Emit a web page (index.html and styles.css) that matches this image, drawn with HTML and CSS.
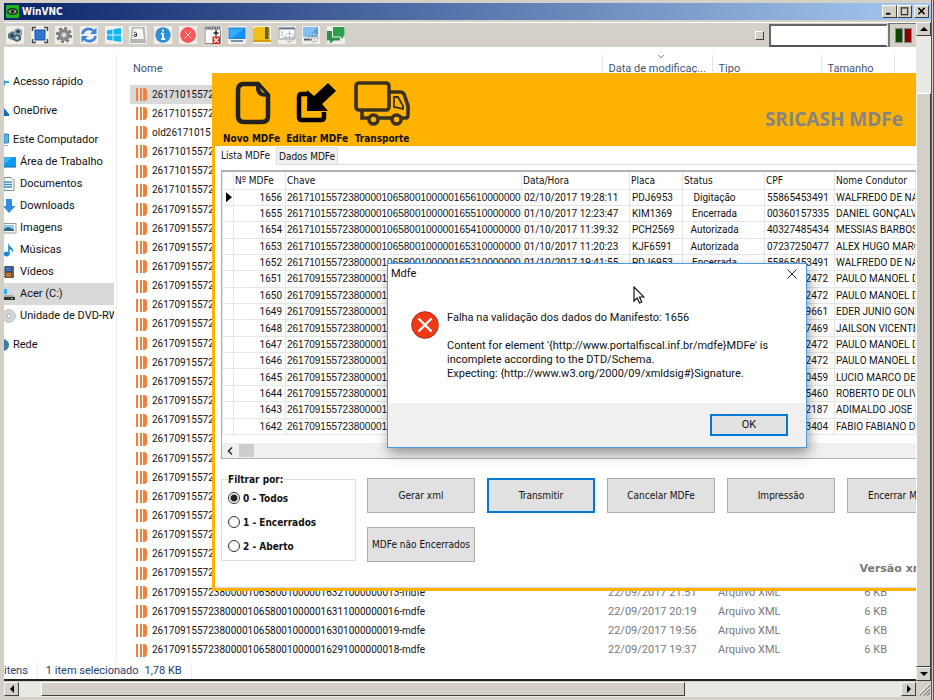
FILE: index.html
```html
<!DOCTYPE html>
<html lang="pt-BR">
<head>
<meta charset="utf-8">
<title>WinVNC</title>
<link rel="stylesheet" href="styles.css">
</head>
<body>
<div class="vnc">
  <header class="titlebar">
    <svg class="titlebar-icon" viewBox="0 0 13 13"><rect width="13" height="13" rx="1" fill="#21b321"/><ellipse cx="6.500" cy="6.500" rx="5.500" ry="3.600" fill="#123012"/><ellipse cx="6.500" cy="6.500" rx="4" ry="2" fill="#8aa08a"/><circle cx="6.500" cy="6.500" r="1.600" fill="#111"/></svg>
    <h1 class="titlebar-text">WinVNC</h1>
    <div class="titlebar-buttons">
      <button class="sys" aria-label="Minimizar"><svg viewBox="0 0 10 9"><path d="M1 7.500h5" stroke="#000" stroke-width="2"/></svg></button>
      <button class="sys" aria-label="Maximizar"><svg viewBox="0 0 10 9"><path d="M1 1h8M1.500 0v8.500h7V0" fill="none" stroke="#333" stroke-width="1.300"/></svg></button>
      <button class="sys sys-close" aria-label="Fechar"><svg viewBox="0 0 10 9"><path d="M1.500 1l7 7M8.500 1l-7 7" stroke="#000" stroke-width="1.700"/></svg></button>
    </div>
  </header>

  <div class="frame">
    <div class="main">
      <div class="toolbar">
        <div class="tools">
          <button class="tool" aria-label="Computadores"><svg viewBox="0 0 18 18"><path d="M2 8l4-3 4 2v4l-4 3-4-2z" fill="#5b7486"/><path d="M8 4l4-2 4 2v5l-4 2-4-2z" fill="#8aa0ae"/><path d="M7 10l4-2 4 2v4l-4 2-4-2z" fill="#4a6375"/><circle cx="12" cy="5.500" r="1.800" fill="#2d4352"/><circle cx="11" cy="12" r="1.800" fill="#c3d3dc"/><circle cx="6" cy="9.500" r="1.500" fill="#223643"/></svg></button>
          <button class="tool" aria-label="Tela cheia"><svg viewBox="0 0 18 18"><rect x="4" y="4" width="10" height="10" fill="#2f76d0" stroke="#1d56a8"/><path d="M1.500 5V1.500H5M13 1.500h3.500V5M16.500 13v3.500H13M5 16.500H1.500V13" fill="none" stroke="#444" stroke-width="1.500"/></svg></button>
          <button class="tool" aria-label="Opções"><svg viewBox="0 0 18 18"><circle cx="9" cy="9" r="6.800" fill="none" stroke="#777" stroke-width="2.600" stroke-dasharray="3 2.340"/><circle cx="9" cy="9" r="4.500" fill="none" stroke="#858585" stroke-width="3.200"/><circle cx="9" cy="9" r="2.500" fill="#e8e8e8" stroke="#555" stroke-width=".6"/></svg></button>
          <button class="tool" aria-label="Atualizar"><svg viewBox="0 0 18 18"><path d="M2.500 8C3 3 10 1 13.500 5M15.500 10C15 15 8 17 4.500 13" fill="none" stroke="#3d84d6" stroke-width="2.600"/><path d="M16.500 1.500v6.500h-6.500zM1.500 16.500V10H8z" fill="#3d84d6"/></svg></button>
          <button class="tool" aria-label="Iniciar"><svg viewBox="0 0 18 18"><path d="M2 4.300l5.500-.8v5H2zM8.500 3.300L16 2v6.500H8.500zM2 9.500h5.500v5L2 13.700zM8.500 9.500H16V16l-7.500-1.200z" fill="#0fb8f2"/></svg></button>
          <button class="tool" aria-label="Teclado"><svg viewBox="0 0 18 18"><path d="M1 17L3 1h12.500l1.500 16z" fill="#b5b5b5"/><path d="M3 13L4.500 2.500h9L15 13z" fill="#f5f5f5"/><path d="M5 7q2-1.500 2.500 0v3.200q-2.500 1-2.800-.5.200-1.500 2.800-1.200" fill="none" stroke="#333" stroke-width="1"/></svg></button>
          <button class="tool" aria-label="Informações"><svg viewBox="0 0 18 18"><circle cx="9" cy="9" r="7.700" fill="#2e8fd6"/><path d="M9 3.600v2M7 7.600h2v5.200M7 13.200h4.300" fill="none" stroke="#fff" stroke-width="1.700"/></svg></button>
          <button class="tool" aria-label="Desconectar"><svg viewBox="0 0 18 18"><circle cx="9" cy="9" r="7.900" fill="#fb5555"/><path d="M5.500 5.500l7 7M12.500 5.500l-7 7" stroke="#ffd8d8" stroke-width="1"/></svg></button>
          <button class="tool" aria-label="Fechar janela"><svg viewBox="0 0 18 18"><path d="M.5.500h16v3H.5z" fill="#6d7480"/><path d="M1 4v13.500h15.500V4" fill="#fff" stroke="#888"/><path d="M1 1.800h10M12 1.800h4" stroke="#d5dae2" stroke-dasharray="1 1"/><path d="M12 4v6M9.500 7h5" stroke="#222" stroke-width="1.400"/><rect x="8.500" y="10.500" width="7.500" height="7.500" fill="#e01818"/><path d="M10 12l4.500 4.500M14.500 12L10 16.500" stroke="#fff" stroke-width="1.500"/></svg></button>
          <button class="tool" aria-label="Área de trabalho"><svg viewBox="0 0 18 18"><rect x="1" y="2" width="16" height="10.500" fill="#0e93f5" stroke="#0873c9" stroke-width=".8"/><path d="M1.500 2.500H16L4 12H1.500z" fill="#35acfa"/><path d="M3 15h12" stroke="#3b6d96" stroke-width="1.400"/></svg></button>
          <button class="tool" aria-label="Arquivos"><svg viewBox="0 0 18 18"><path d="M0 3l2-2h14l1 2v13H0z" fill="#f2c117"/><path d="M0 14h18v2H0z" fill="#d99c08"/><rect x="12" y="1" width="3.500" height="12" fill="#5a533a"/><path d="M13.700 2v9" stroke="#8c8050" stroke-dasharray="1 1"/></svg></button>
          <button class="tool" aria-label="Selecionar janela"><svg viewBox="0 0 18 18"><path d="M1 2h16v11H1z" fill="#fff" stroke="#8d99a6"/><path d="M1 2.500h16" stroke="#6d7d8f" stroke-width="2"/><path d="M3 6h2M3 9h2" stroke="#99a"/><circle cx="11.500" cy="11.500" r="4.200" fill="none" stroke="#bbb"/><path d="M11.500 5v12M5 11.500h12.500" stroke="#bbb"/></svg></button>
          <button class="tool" aria-label="Selecionar monitor"><svg viewBox="0 0 18 18"><rect x="1" y="1" width="15" height="10" fill="#4aa0ea"/><path d="M1 1h15L6 11H1z" fill="#83c0f2"/><path d="M2 13.500h8" stroke="#557" stroke-width="2"/><circle cx="12" cy="12" r="4" fill="none" stroke="#c4c4c4"/><path d="M12 6.500v11M6 12h11.500" stroke="#c4c4c4"/></svg></button>
          <button class="tool" aria-label="Conversa"><svg viewBox="0 0 18 18"><path d="M6 1h11.500v9.500H16V13l-3-2.500H6z" fill="#2f9e4d"/><path d="M0 5h5v6.500h8v3H7l-4 3v-3H0z" fill="#2a9448"/></svg></button>
        </div>
        <div class="tool-dot"></div>
        <input class="tool-input" type="text" aria-label="Mensagem">
        <div class="leds"><i class="led led-green"></i><i class="led led-red"></i></div>
      </div>

      <div class="screen">
        <div class="explorer">
          <nav class="sidebar">
            <a class="place place-top" href="#"><svg class="place-icon" viewBox="0 0 9 14"><path d="M0 4l1 2h4v2H1.500L0 12z" fill="#3a9be0"/></svg>Acesso rápido</a>
            <a class="place place-top" href="#"><svg class="place-icon" viewBox="0 0 9 14"><path d="M0 4l5 6v2H0z" fill="#0a6cc8"/></svg>OneDrive</a>
            <a class="place place-top" href="#"><svg class="place-icon" viewBox="0 0 9 14"><path d="M0 1h4.500v9H0z" fill="#4fb9ee" stroke="#2d6f9c" stroke-width=".8"/><path d="M0 12.500h4" stroke="#9ab"/></svg>Este Computador</a>
            <a class="place" href="#"><svg class="place-icon" viewBox="0 0 14 14"><path d="M0 2h12v10H0z" fill="#139af0"/><path d="M0 2h9L0 9z" fill="#3fb2f8"/><path d="M0 12h12" stroke="#0b62ad"/></svg>Área de Trabalho</a>
            <a class="place" href="#"><svg class="place-icon" viewBox="0 0 14 14"><path d="M0 .5h7l3 3v10H0z" fill="#fff" stroke="#888"/><path d="M0 5h8M0 7.500h8M0 10h8" stroke="#3f93bb" stroke-width="1.300"/></svg>Documentos</a>
            <a class="place" href="#"><svg class="place-icon" viewBox="0 0 14 14"><path d="M2 0h6v7h3.500L5 14-1 7h3z" fill="#2f8ce0"/></svg>Downloads</a>
            <a class="place" href="#"><svg class="place-icon" viewBox="0 0 14 14"><path d="M0 2.500h12v9.500H0z" fill="#fff" stroke="#999"/><path d="M0 4h10v4H0z" fill="#8cc8f0"/><path d="M0 8l4-2 6 2.500V10H0z" fill="#2f6484"/></svg>Imagens</a>
            <a class="place" href="#"><svg class="place-icon" viewBox="0 0 14 14"><path d="M4.200 0Q5 3 8 5q2 2.500.5 5Q8.500 7 5.700 6V11a3 2.400 0 1 1-1.500-2z" fill="#1387dd"/></svg>Músicas</a>
            <a class="place" href="#"><svg class="place-icon" viewBox="0 0 14 14"><path d="M0 1h10v12H0z" fill="#333"/><path d="M1.500 1.500h6v5h-6z" fill="#3e6fc0"/><path d="M1.500 7.500h6v5h-6z" fill="#b5762e"/><path d="M9 1v12M.5 1v12" stroke="#ddd" stroke-dasharray="1.200 1"/></svg>Vídeos</a>
            <a class="place place-active" href="#"><svg class="place-icon" viewBox="0 0 14 14"><path d="M0 2h3v5H0z" fill="#1fb4f0"/><path d="M0 8h9l1.500 2.500H0z" fill="#aaa"/><path d="M0 10h11v3H0z" fill="#333"/><path d="M7 11.500h2" stroke="#3f6"/></svg>Acer (C:)</a>
            <a class="place" href="#"><svg class="place-icon" viewBox="0 0 14 14"><circle cx="5" cy="7" r="6.500" fill="#d2d5d6" stroke="#aaa" stroke-width=".6"/><circle cx="5" cy="7" r="2" fill="#fff" stroke="#999" stroke-width=".8"/></svg>Unidade de DVD-RW</a>
            <a class="place place-top" href="#"><svg class="place-icon" viewBox="0 0 9 14"><path d="M0 1q5 1.500 5 6t-5 6z" fill="#3d7f9c"/></svg>Rede</a>
          </nav>

          <div class="files">
            <table class="files-head">
              <thead>
                <tr><th class="f-name">Nome</th><th class="f-date">Data de modificaç...<svg class="sort" viewBox="0 0 8 4"><path d="M1 0l3 3 3-3" fill="none" stroke="#888"/></svg></th><th class="f-type">Tipo</th><th class="f-size">Tamanho</th><th></th></tr>
              </thead>
            </table>
            <table class="files-body">
              <tbody>
                <tr class="selected"><td class="f-name">26171015572</td><td class="f-date"></td><td class="f-type"></td><td class="f-size"></td><td></td></tr>
                <tr><td class="f-name">26171015572</td></tr>
                <tr><td class="f-name">old26171015</td></tr>
                <tr><td class="f-name">26171015572</td></tr>
                <tr><td class="f-name">26171015572</td></tr>
                <tr><td class="f-name">26171015572</td></tr>
                <tr><td class="f-name">26170915572</td></tr>
                <tr><td class="f-name">26170915572</td></tr>
                <tr><td class="f-name">26170915572</td></tr>
                <tr><td class="f-name">26170915572</td></tr>
                <tr><td class="f-name">26170915572</td></tr>
                <tr><td class="f-name">26170915572</td></tr>
                <tr><td class="f-name">26170915572</td></tr>
                <tr><td class="f-name">26170915572</td></tr>
                <tr><td class="f-name">26170915572</td></tr>
                <tr><td class="f-name">26170915572</td></tr>
                <tr><td class="f-name">26170915572</td></tr>
                <tr><td class="f-name">26170915572</td></tr>
                <tr><td class="f-name">26170915572</td></tr>
                <tr><td class="f-name">26170915572</td></tr>
                <tr><td class="f-name">26170915572</td></tr>
                <tr><td class="f-name">26170915572</td></tr>
                <tr><td class="f-name">26170915572</td></tr>
                <tr><td class="f-name">26170915572</td></tr>
                <tr><td class="f-name">26170915572</td></tr>
                <tr><td class="f-name">26170915572</td></tr>
                <tr><td class="f-name">26170915572380000106580010000016321000000013-mdfe</td><td class="f-date">22/09/2017 21:51</td><td class="f-type">Arquivo XML</td><td class="f-size">6 KB</td></tr>
                <tr><td class="f-name">26170915572380000106580010000016311000000016-mdfe</td><td class="f-date">22/09/2017 20:19</td><td class="f-type">Arquivo XML</td><td class="f-size">6 KB</td></tr>
                <tr><td class="f-name">26170915572380000106580010000016301000000019-mdfe</td><td class="f-date">22/09/2017 19:56</td><td class="f-type">Arquivo XML</td><td class="f-size">6 KB</td></tr>
                <tr><td class="f-name">26170915572380000106580010000016291000000018-mdfe</td><td class="f-date">22/09/2017 19:37</td><td class="f-type">Arquivo XML</td><td class="f-size">6 KB</td></tr>
              </tbody>
            </table>
          </div>
        </div>
        <footer class="status"><span class="status-cell">itens</span><span class="status-cell status-sel"><span>1 item selecionado</span><span>1,78 KB</span></span></footer>

        <section class="app">
          <div class="app-head">
            <button class="action"><svg viewBox="0 0 56 46"><path d="M20 3h14l10 11v21q0 6-6 6H20q-6 0-6-6V9q0-6 6-6z" fill="none" stroke="#222" stroke-width="4.500"/><path d="M32 2l14 13q-12 3-14-6z" fill="#222"/><path d="M36 7l5 5q-4 0-5-5z" fill="#f5ad0a"/></svg>Novo MDFe</button>
            <button class="action"><svg viewBox="0 0 56 46"><path d="M19 13h-6q-3 0-3 3v20q0 3 3 3h19q3 0 3-3v-5" fill="none" stroke="#000" stroke-width="4.500"/><path d="M39 2l8 8-14 13 6 7H18V9l7 6z" fill="#000"/></svg>Editar MDFe</button>
            <button class="action"><svg viewBox="0 0 56 46"><g fill="none" stroke="#3b321b" stroke-width="3.600"><rect x="2" y="2" width="33" height="27" rx="3"/><path d="M8 30v7h6M24 37h14M47 37h5q2 0 2-3v-9l-4-12q-1-2-4-2H36"/><circle cx="19.500" cy="38.500" r="4.500"/><circle cx="42.500" cy="38.500" r="4.500"/></g><path d="M40 16h4l5 9v3l-9-2z" fill="none" stroke="#3b321b" stroke-width="1.800"/></svg>Transporte</button>
            <h2 class="brand">SRICASH MDFe</h2>
          </div>

          <div class="app-body">
            <div class="tabs">
              <button class="tab tab-active">Lista MDFe</button>
              <button class="tab">Dados MDFe</button>
            </div>

            <div class="grid">
              <table class="records">
                <thead>
                  <tr><th class="c-mark"></th><th class="c-num">Nº MDFe</th><th class="c-key">Chave</th><th class="c-date">Data/Hora</th><th class="c-plate">Placa</th><th class="c-status">Status</th><th class="c-cpf">CPF</th><th class="c-driver">Nome Condutor</th></tr>
                </thead>
                <tbody>
                  <tr><td class="c-mark"><i class="marker"></i></td><td class="c-num">1656</td><td class="c-key">261710155723800001065800100000165610000000</td><td>02/10/2017 19:28:11</td><td>PDJ6953</td><td class="c-status">Digitação</td><td class="c-cpf">55865453491</td><td>WALFREDO DE NA</td></tr>
                  <tr><td></td><td class="c-num">1655</td><td class="c-key">261710155723800001065800100000165510000000</td><td>01/10/2017 12:23:47</td><td>KIM1369</td><td class="c-status">Encerrada</td><td class="c-cpf">00360157335</td><td>DANIEL GONÇALV</td></tr>
                  <tr><td></td><td class="c-num">1654</td><td class="c-key">261710155723800001065800100000165410000000</td><td>01/10/2017 11:39:32</td><td>PCH2569</td><td class="c-status">Autorizada</td><td class="c-cpf">40327485434</td><td>MESSIAS BARBOS</td></tr>
                  <tr><td></td><td class="c-num">1653</td><td class="c-key">261710155723800001065800100000165310000000</td><td>01/10/2017 11:20:23</td><td>KJF6591</td><td class="c-status">Autorizada</td><td class="c-cpf">07237250477</td><td>ALEX HUGO MARC</td></tr>
                  <tr><td></td><td class="c-num">1652</td><td class="c-key">261710155723800001065800100000165210000000</td><td>01/10/2017 19:41:55</td><td>PDJ6953</td><td class="c-status">Encerrada</td><td class="c-cpf">55865453491</td><td>WALFREDO DE NA</td></tr>
                  <tr><td></td><td class="c-num">1651</td><td class="c-key">261709155723800001</td><td></td><td></td><td></td><td class="c-cpf">2472</td><td>PAULO MANOEL D</td></tr>
                  <tr><td></td><td class="c-num">1650</td><td class="c-key">261709155723800001</td><td></td><td></td><td></td><td class="c-cpf">2472</td><td>PAULO MANOEL D</td></tr>
                  <tr><td></td><td class="c-num">1649</td><td class="c-key">261709155723800001</td><td></td><td></td><td></td><td class="c-cpf">9661</td><td>EDER JUNIO GON</td></tr>
                  <tr><td></td><td class="c-num">1648</td><td class="c-key">261709155723800001</td><td></td><td></td><td></td><td class="c-cpf">7469</td><td>JAILSON VICENTE</td></tr>
                  <tr><td></td><td class="c-num">1647</td><td class="c-key">261709155723800001</td><td></td><td></td><td></td><td class="c-cpf">2472</td><td>PAULO MANOEL D</td></tr>
                  <tr><td></td><td class="c-num">1646</td><td class="c-key">261709155723800001</td><td></td><td></td><td></td><td class="c-cpf">2472</td><td>PAULO MANOEL D</td></tr>
                  <tr><td></td><td class="c-num">1645</td><td class="c-key">261709155723800001</td><td></td><td></td><td></td><td class="c-cpf">0459</td><td>LUCIO MARCO DE</td></tr>
                  <tr><td></td><td class="c-num">1644</td><td class="c-key">261709155723800001</td><td></td><td></td><td></td><td class="c-cpf">5460</td><td>ROBERTO DE OLIV</td></tr>
                  <tr><td></td><td class="c-num">1643</td><td class="c-key">261709155723800001</td><td></td><td></td><td></td><td class="c-cpf">2187</td><td>ADIMALDO JOSE F</td></tr>
                  <tr><td></td><td class="c-num">1642</td><td class="c-key">261709155723800001</td><td></td><td></td><td></td><td class="c-cpf">3404</td><td>FABIO FABIANO D</td></tr>
                </tbody>
              </table>
              <div class="grid-scroll"><svg viewBox="0 0 6 8"><path d="M5 .5L1.500 4 5 7.500" fill="none" stroke="#333" stroke-width="1.600"/></svg><div class="grid-thumb"></div></div>
            </div>

            <div class="controls">
              <fieldset class="filter">
                <legend>Filtrar por:</legend>
                <label><input type="radio" name="filtro" checked>0 - Todos</label>
                <label><input type="radio" name="filtro">1 - Encerrados</label>
                <label><input type="radio" name="filtro">2 - Aberto</label>
              </fieldset>
              <div class="buttons">
                <button class="cmd">Gerar xml</button>
                <button class="cmd cmd-focus">Transmitir</button>
                <button class="cmd">Cancelar MDFe</button>
                <button class="cmd">Impressão</button>
                <button class="cmd">Encerrar MDFe</button>
                <button class="cmd">MDFe não Encerrados</button>
              </div>
            </div>
            <p class="version">Versão xml</p>
          </div>
        </section>

        <section class="dialog" role="dialog" aria-labelledby="dialog-title">
          <div class="dialog-head"><h2 id="dialog-title">Mdfe</h2><button class="dialog-close" aria-label="Fechar"><svg viewBox="0 0 10 10"><path d="M.5.500l9 9M9.500.500l-9 9" stroke="#222"/></svg></button></div>
          <div class="dialog-body">
            <svg class="error-icon" viewBox="0 0 28 28"><circle cx="14" cy="14" r="13.300" fill="#f03a17" stroke="#b82c17" stroke-width="1"/><path d="M7.500 7.500l13 13M20.500 7.500l-13 13" stroke="#fff" stroke-width="2.400"/></svg>
            <div class="dialog-text">
              <p>Falha na validação dos dados do Manifesto: 1656</p>
              <p>Content for element '{http://www.portalfiscal.inf.br/mdfe}MDFe' is<br>incomplete according to the DTD/Schema.<br>Expecting: {http://www.w3.org/2000/09/xmldsig#}Signature.</p>
            </div>
          </div>
          <div class="dialog-foot"><button class="ok">OK</button></div>
        </section>
        <svg class="cursor" viewBox="0 0 12 18"><path d="M1 1v14l3.200-3 2.300 5 2.300-1-2.300-5H11z" fill="#fff" stroke="#1a1014" stroke-width="1.200"/></svg>
      </div>

      <div class="hscroll">
        <button class="arrow" aria-label="Rolar para a esquerda"><svg viewBox="0 0 8 8"><path d="M6 0v8L2 4z"/></svg></button>
        <div class="htrack"><div class="hthumb"></div></div>
        <button class="arrow" aria-label="Rolar para a direita"><svg viewBox="0 0 8 8"><path d="M2 0v8l4-4z"/></svg></button>
      </div>
    </div>

    <div class="vscroll">
      <button class="arrow" aria-label="Rolar para cima"><svg viewBox="0 0 8 8"><path d="M0 6h8L4 2z"/></svg></button>
      <div class="vtrack"><div class="vthumb"></div></div>
      <button class="arrow" aria-label="Rolar para baixo"><svg viewBox="0 0 8 8"><path d="M0 2h8L4 6z"/></svg></button>
      <svg class="grip" viewBox="0 0 16 16"><path d="M4 15L15 4M8 15l7-7M12 15l3-3" stroke="#888" stroke-width="1.500"/><path d="M3 14L14 3M7 14l7-7" stroke="#fff"/></svg>
    </div>
  </div>
</div>
</body>
</html>
```
FILE: styles.css
```css
:root {
  --segoe: Roboto, "Open Sans", sans-serif;
  --tahoma: "DejaVu Sans Condensed", "DejaVu Sans", sans-serif;
  --face: #d4d0c8;
  --amber: #ffb200;
}
* { box-sizing: border-box; }
body, h1, h2, p { margin: 0; }
body { font: 11px/14px var(--segoe); color: #111; background: var(--face); }
button, input { font: inherit; color: inherit; margin: 0; padding: 0; }
svg { display: block; }
table { border-collapse: collapse; table-layout: fixed; }
th { font-weight: normal; text-align: left; }
a { color: inherit; text-decoration: none; }

/* outer window */
.vnc {
  display: flex;
  flex-direction: column;
  height: 100vh;
  padding: 3px 0 3px 4px;
  border-right: 3px double #555;
  background: var(--face);
  overflow: hidden;
}
.titlebar {
  display: flex;
  align-items: center;
  gap: 3px;
  height: 17px;
  padding: 0 2px;
  background: linear-gradient(90deg, #0a246a, #a6caf0);
}
.titlebar-icon { width: 13px; height: 13px; }
.titlebar-text { flex: 1; font: bold 10px/16px var(--tahoma); color: #fff; }
.titlebar-buttons { display: flex; }
.sys {
  width: 15px;
  height: 13px;
  padding: 1px 2px;
  background: var(--face);
  border: 1px solid;
  border-color: #fff #404040 #404040 #fff;
}
.sys-close { margin-left: 2px; }
.frame { display: flex; flex: 1; min-height: 0; padding-top: 2px; }
.main { display: flex; flex-direction: column; flex: 1; min-width: 0; }
.toolbar {
  display: flex;
  align-items: center;
  height: 25px;
  padding-left: 2px;
  border-top: 1px solid #fff;
}
.tools { display: flex; justify-content: space-between; width: 339px; }
.tool { width: 18px; height: 18px; border: 0; background: #f0efec; }
.tool-dot {
  width: 9px;
  height: 9px;
  margin: 0 5px 0 auto;
  border: 1px solid;
  border-color: #fff #404040 #404040 #fff;
}
.tool-input {
  width: 119px;
  height: 23px;
  border: 2px solid;
  border-color: #666 #f4f4f4 #555 #666;
  background: #fff;
}
.leds {
  display: flex;
  align-items: center;
  justify-content: center;
  gap: 1px;
  width: 28px;
  height: 24px;
  border-left: 2px solid #777;
  border-top: 1px solid #777;
}
.led { width: 8px; height: 15px; border: 1px solid #888; }
.led-green { background: #0a4a06; }
.led-red { background: #8c0000; }

/* classic scroll bars */
.arrow {
  display: flex;
  flex: none;
  align-items: center;
  justify-content: center;
  width: 15px;
  height: 14px;
  background: var(--face);
  border: 1px solid;
  border-color: #f4f4f4 #404040 #404040 #f4f4f4;
}
.arrow svg { width: 8px; height: 8px; }
.htrack, .vtrack { flex: 1; background: #e9e8e4; }
.hscroll { display: flex; height: 16px; padding-top: 1px; }
.hthumb {
  width: 73%;
  height: 14px;
  margin-left: 22px;
  background: var(--face);
  border: 1px solid;
  border-color: #fff #404040 #404040 #fff;
}
.vscroll { display: flex; flex-direction: column; width: 15px; }
.vtrack { padding-top: 57px; }
.vthumb {
  height: 100%;
  background: var(--face);
  border: 1px solid;
  border-color: #fff #404040 #404040 #fff;
}
.grip { width: 15px; height: 16px; }

/* remote desktop */
.screen {
  position: relative;
  display: flex;
  flex: 1;
  flex-direction: column;
  min-height: 0;
  background: #fff;
  border-bottom: 2px solid #222;
  overflow: hidden;
}
.explorer { display: flex; flex: 1; min-height: 0; padding-top: 8px; }
.sidebar {
  flex: none;
  width: 113px;
  padding-top: 16px;
  border-right: 1px solid #eee;
  overflow: hidden;
}
.place {
  display: flex;
  align-items: center;
  gap: 2px;
  height: 22px;
  margin-right: 2px;
  white-space: nowrap;
  overflow: hidden;
}
.place-icon { flex: none; width: 14px; height: 14px; }
.place-top { margin-top: 7px; gap: 0; }
.place-top .place-icon { width: 9px; }
.place-top:first-child { margin-top: 0; }
.place-active { background: #d9d9d9; }
.files { flex: 1; min-width: 0; padding-left: 13px; }
.files-head { width: 100%; color: #44546f; }
.files-head th { position: relative; height: 24px; padding: 4px 0 0 6px; border-left: 1px solid #e5e5e5; white-space: nowrap; }
.files-head th:first-child { padding-left: 3px; border-left: 0; }
.sort { position: absolute; top: 0; left: 50%; width: 8px; height: 4px; }
.files-body { width: 100%; height: 575px; margin-top: 6px; }
.files-body td { padding: 0 0 0 6px; line-height: 14px; white-space: nowrap; color: #7a7a7a; }
.f-name { width: 472px; }
.f-date { width: 110px; }
.f-type { width: 109px; }
.f-size { width: 73px; }
.files-body .f-size { padding-right: 7px; text-align: right; }
.files-body .f-name { position: relative; padding-left: 22px; color: #111; font-size: 10px; }
.files-body .f-name::before {
  content: "";
  position: absolute;
  left: 6px;
  top: 3px;
  width: 11px;
  height: 13px;
  border-radius: 0 3px 3px 0;
  background: linear-gradient(90deg, #f0803a 2px, #fff0 2px 4px, #f0803a 4px 6px, #fff0 6px 7px, #f0803a 7px);
}
.selected .f-name { background: #d9d9d9; }
.status { display: flex; height: 17px; line-height: 18px; color: #26406e; }
.status-cell { padding-right: 9px; border-right: 1px solid #eee; }
.status-sel { display: flex; gap: 6px; padding-left: 8px; }

/* MDFe application window */
.app {
  position: absolute;
  left: 208px;
  top: 26px;
  right: 0;
  display: flex;
  flex-direction: column;
  background: #fff;
  border: solid var(--amber);
  border-width: 0 0 3px 3px;
  font: 10px/13px var(--tahoma);
}
.app-head {
  display: flex;
  align-items: flex-end;
  gap: 6px;
  height: 73px;
  margin-left: -3px;
  padding: 0 13px 1px 11px;
  background: var(--amber);
}
.action {
  display: flex;
  flex-direction: column;
  align-items: center;
  gap: 5px;
  border: 0;
  background: none;
  font-weight: bold;
  line-height: 13px;
  white-space: nowrap;
}
.action svg { width: 56px; height: 46px; }
.brand { margin-left: auto; padding-bottom: 14px; font: bold 19px/24px "Open Sans", sans-serif; color: #858585; }
.app-body { padding-bottom: 12px; border-bottom: 1px solid #d6dbe4; }
.tabs { display: flex; align-items: flex-end; height: 19px; border-bottom: 1px solid #ddd; }
.tab { height: 17px; padding: 0 2px; border: 1px solid #ddd; border-bottom: 0; background: #f0f0f0; }
.tab-active { height: 19px; margin-bottom: -1px; padding: 0 6px 1px 6px; border: 0; background: #fff; }
.grid { margin: 5px 0 0 6px; border: solid #aeb2b8; border-width: 2px 0 1px 1px; overflow: hidden; }
.records { width: 100%; height: 263px; }
.records th, .records td {
  height: 16px;
  padding: 0 0 0 2px;
  border: 1px solid #e6e6e6;
  border-top: 0;
  overflow: hidden;
  white-space: nowrap;
}
.records th { height: 17px; padding-left: 1px; }
.records td { font-family: Roboto, sans-serif; }
.records td.c-key { padding-left: 1px; font-family: "Liberation Sans", sans-serif; }
.records .c-mark { width: 11px; padding: 0 0 0 3px; }
.marker { display: block; width: 6px; height: 10px; background: #000; clip-path: polygon(0 0, 100% 50%, 0 100%); }
.c-num { width: 52px; }
.c-key { width: 236px; }
.c-date { width: 108px; }
.c-plate { width: 53px; }
.c-status { width: 82px; }
.c-cpf { width: 70px; }
.records td.c-num { padding-right: 3px; text-align: right; }
.records td.c-status { padding: 0 18px 0 0; text-align: center; }
.records td.c-cpf { padding-right: 6px; text-align: right; }
.records td:last-child { padding-left: 1px; }
.grid-scroll { display: flex; align-items: center; gap: 6px; height: 15px; margin-top: 8px; padding-left: 5px; background: #f0f0f0; }
.grid-scroll svg { width: 6px; height: 8px; }
.grid-thumb { width: 15px; height: 13px; background: #cdcdcd; }
.controls { display: flex; gap: 11px; margin: 14px 0 0 6px; }
.filter {
  flex: none;
  width: 135px;
  height: 88px;
  margin: 0;
  padding: 0 6px;
  border: 1px solid #ddd;
  font-weight: bold;
}
.filter legend { padding: 0; line-height: 13px; }
.filter label { display: flex; align-items: center; gap: 3px; height: 24px; }
.filter input {
  width: 12px;
  height: 12px;
  appearance: none;
  border: 1px solid #333;
  border-radius: 50%;
  background: #fff;
}
.filter input:checked { background: radial-gradient(#222 0 3px, #fff 4px); }
.buttons {
  display: grid;
  flex: 1;
  min-width: 0;
  grid-template-columns: repeat(5, 108px);
  grid-auto-rows: 35px;
  gap: 14px 12px;
  padding-top: 5px;
  overflow: hidden;
}
.cmd { border: 1px solid #adadad; background: #e1e1e1; white-space: nowrap; }
.cmd-focus { border: 2px solid #0078d7; }
.version { margin-right: -12px; text-align: right; font: bold 11px/13px "DejaVu Sans", sans-serif; color: #777; }

/* message box */
.dialog {
  position: absolute;
  left: 383px;
  top: 216px;
  width: 420px;
  background: #fff;
  border: 1px solid #4a9be0;
  box-shadow: 2px 5px 12px rgba(0, 0, 0, .4);
}
.dialog-head { display: flex; justify-content: space-between; padding: 3px 9px 0 3px; }
.dialog-head h2 { font: inherit; }
.dialog-close { width: 10px; height: 10px; margin-top: 2px; border: 0; background: none; }
.dialog-body { display: flex; gap: 8px; padding: 30px 24px 22px 23px; }
.error-icon { width: 28px; height: 28px; }
.dialog-text { display: flex; flex-direction: column; gap: 14px; white-space: nowrap; }
.dialog-foot { display: flex; justify-content: flex-end; padding: 11px 18px; background: #f0f0f0; }
.ok { width: 78px; height: 22px; border: 2px solid #0078d7; background: #e1e1e1; }
.cursor { position: absolute; left: 629px; top: 239px; width: 12px; height: 18px; }
```
